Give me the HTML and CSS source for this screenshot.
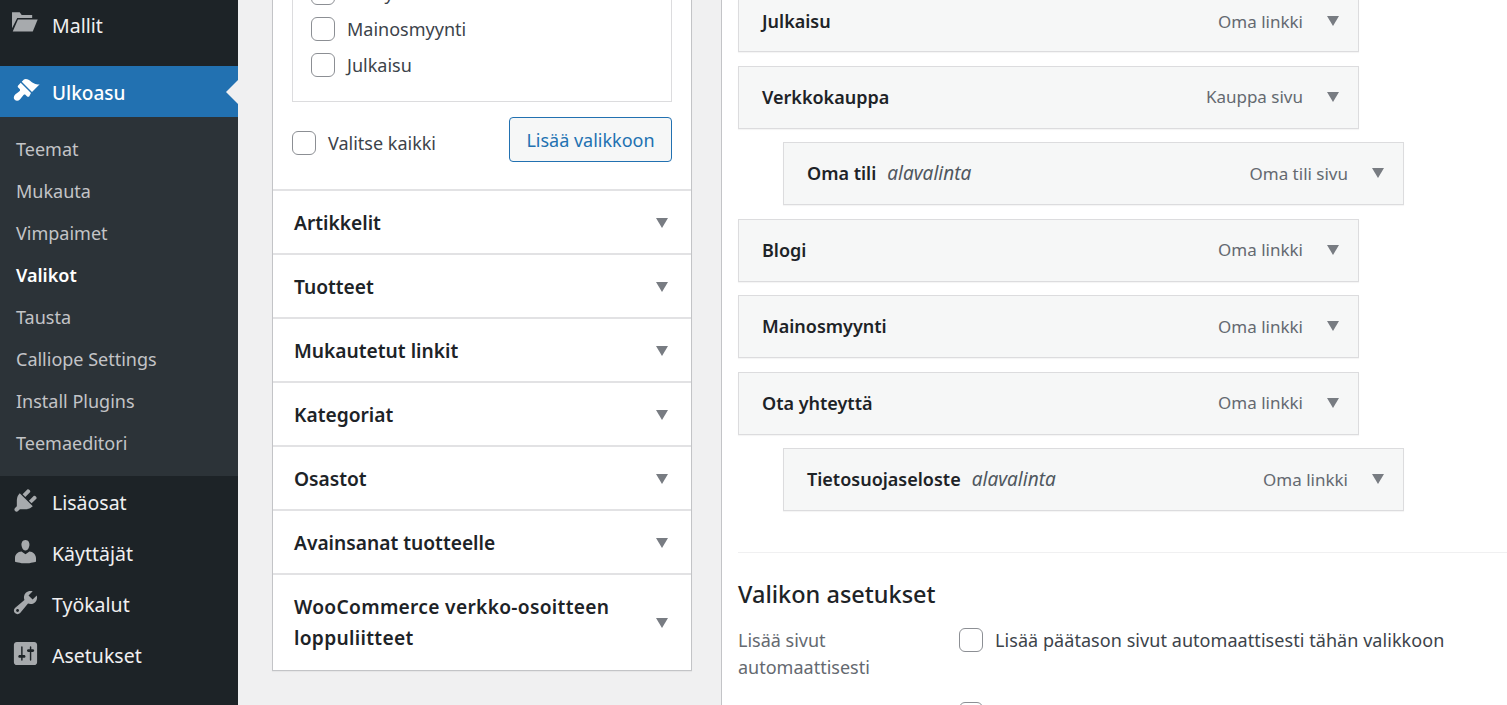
FILE: index.html
```html
<!DOCTYPE html>
<html lang="fi">
<head>
<meta charset="utf-8">
<title>Valikot</title>
<link rel="stylesheet" href="styles.css">
</head>
<body>
<div class="page">
  <aside class="sidebar">
    <a class="nav-item">
      <svg class="nav-icon" viewBox="0 0 20 20"><path d="M.7 2.2h5.3l1.4 1.9h7.2v2.1H4.3L.7 13.2z"/><path d="M4.8 7.2h13.6L15 15.5H1.2z"/></svg>
      <span>Mallit</span>
    </a>
    <div class="nav-sep"></div>
    <a class="nav-item is-current">
      <svg class="nav-icon" viewBox="0 0 20 20"><path d="M14.48 11.06L7.41 3.99l1.5-1.5c.5-.56 2.3-.47 3.51.32 1.21.8 1.43 1.28 2.91 2.1 1.18.64 2.45 1.26 4.45.85zm-.71.71L6.7 4.7 4.93 6.47c-.39.39-.39 1.02 0 1.41l1.06 1.06c.39.39.39 1.03 0 1.42-.6.6-1.43 1.11-2.21 1.69-.35.26-.7.53-1.01.84-1.03 1.03-1.1 2.65-.2 3.56.9.9 2.53.83 3.56-.2.31-.31.58-.66.84-1.01.58-.78 1.09-1.61 1.69-2.21.39-.39 1.03-.39 1.42 0l1.06 1.06c.39.39 1.02.39 1.41 0z"/></svg>
      <span>Ulkoasu</span>
    </a>
    <ul class="submenu">
      <li>Teemat</li>
      <li>Mukauta</li>
      <li>Vimpaimet</li>
      <li class="is-active">Valikot</li>
      <li>Tausta</li>
      <li>Calliope Settings</li>
      <li>Install Plugins</li>
      <li>Teemaeditori</li>
    </ul>
    <a class="nav-item">
      <svg class="nav-icon" viewBox="0 0 20 20"><path d="M13.11 4.36L9.87 7.6 8 5.73l3.24-3.24c.35-.34 1.05-.2 1.56.32.52.51.66 1.21.31 1.55zm-8 1.77l.91-1.12 9.01 9.01-1.19.84c-.71.71-2.63 1.16-3.82 1.16H6.14L4.9 17.26c-.59.59-1.54.59-2.12 0-.59-.58-.59-1.53 0-2.12l1.24-1.24v-3.88c0-1.13.4-3.19 1.09-3.89zm7.26 3.97l3.24-3.24c.34-.35 1.04-.21 1.55.31.52.51.66 1.21.31 1.55l-3.24 3.25z"/></svg>
      <span>Lisäosat</span>
    </a>
    <a class="nav-item">
      <svg class="nav-icon" viewBox="0 0 20 20"><path d="M10 9.25c-2.27 0-2.73-3.44-2.73-3.44C7 4.02 7.82 2 9.97 2c2.16 0 2.98 2.02 2.71 3.81 0 0-.41 3.44-2.68 3.44zm0 2.57L12.72 10c2.39 0 4.52 2.33 4.52 4.53v2.49s-3.65 1.13-7.24 1.13c-3.65 0-7.24-1.13-7.24-1.13v-2.49c0-2.25 1.94-4.48 4.47-4.48z"/></svg>
      <span>Käyttäjät</span>
    </a>
    <a class="nav-item">
      <svg class="nav-icon" viewBox="0 0 20 20"><path d="M16.68 9.77c-1.34 1.34-3.3 1.67-4.95.99l-5.41 6.52c-.99.99-2.59.99-3.58 0s-.99-2.59 0-3.57l6.52-5.42c-.68-1.65-.35-3.61.99-4.95 1.28-1.28 3.12-1.62 4.72-1.06l-2.89 2.89 2.82 2.82 2.86-2.87c.53 1.58.18 3.39-1.08 4.65zM3.81 16.21c.4.39 1.04.39 1.43 0 .4-.4.4-1.04 0-1.43-.39-.4-1.03-.4-1.43 0-.39.39-.39 1.03 0 1.43z"/></svg>
      <span>Työkalut</span>
    </a>
    <a class="nav-item">
      <svg class="nav-icon" viewBox="0 0 20 20"><path d="M18 16V4c0-1.1-.9-2-2-2H4c-1.1 0-2 .9-2 2v12c0 1.1.9 2 2 2h12c1.1 0 2-.9 2-2zM8 11h1c.55 0 1 .45 1 1s-.45 1-1 1H8v1.5c0 .28-.22.5-.5.5s-.5-.22-.5-.5V13H6c-.55 0-1-.45-1-1s.45-1 1-1h1V5.5c0-.28.22-.5.5-.5s.5.22.5.5V11zm5-2h-1c-.55 0-1-.45-1-1s.45-1 1-1h1V5.5c0-.28.22-.5.5-.5s.5.22.5.5V7h1c.55 0 1 .45 1 1s-.45 1-1 1h-1v5.5c0 .28-.22.5-.5.5s-.5-.22-.5-.5V9z"/></svg>
      <span>Asetukset</span>
    </a>
  </aside>

  <main class="content">
    <section class="picker">
      <div class="picker-top">
        <div class="checklist">
          <label class="check-row"><span class="checkbox"></span>Yhteystiedot</label>
          <label class="check-row"><span class="checkbox"></span>Mainosmyynti</label>
          <label class="check-row"><span class="checkbox"></span>Julkaisu</label>
        </div>
        <div class="picker-actions">
          <label class="check-row select-all"><span class="checkbox"></span>Valitse kaikki</label>
          <button class="add-button" type="button">Lisää valikkoon</button>
        </div>
      </div>
      <div class="accordion-item"><span>Artikkelit</span><i class="arrow"></i></div>
      <div class="accordion-item"><span>Tuotteet</span><i class="arrow"></i></div>
      <div class="accordion-item"><span>Mukautetut linkit</span><i class="arrow"></i></div>
      <div class="accordion-item"><span>Kategoriat</span><i class="arrow"></i></div>
      <div class="accordion-item"><span>Osastot</span><i class="arrow"></i></div>
      <div class="accordion-item"><span>Avainsanat tuotteelle</span><i class="arrow"></i></div>
      <div class="accordion-item is-tall"><span>WooCommerce verkko-osoitteen loppuliitteet</span><i class="arrow"></i></div>
    </section>

    <section class="editor">
      <div class="menu-items">
        <div class="menu-item"><strong>Julkaisu</strong><span class="item-type">Oma linkki</span><i class="arrow"></i></div>
        <div class="menu-item"><strong>Verkkokauppa</strong><span class="item-type">Kauppa sivu</span><i class="arrow"></i></div>
        <div class="menu-item is-sub"><strong>Oma tili</strong><em>alavalinta</em><span class="item-type">Oma tili sivu</span><i class="arrow"></i></div>
        <div class="menu-item"><strong>Blogi</strong><span class="item-type">Oma linkki</span><i class="arrow"></i></div>
        <div class="menu-item"><strong>Mainosmyynti</strong><span class="item-type">Oma linkki</span><i class="arrow"></i></div>
        <div class="menu-item"><strong>Ota yhteyttä</strong><span class="item-type">Oma linkki</span><i class="arrow"></i></div>
        <div class="menu-item is-sub"><strong>Tietosuojaseloste</strong><em>alavalinta</em><span class="item-type">Oma linkki</span><i class="arrow"></i></div>
      </div>
      <div class="settings">
        <h3>Valikon asetukset</h3>
        <div class="setting-row">
          <div class="setting-label">Lisää sivut automaattisesti</div>
          <label class="check-row setting-check"><span class="checkbox"></span>Lisää päätason sivut automaattisesti tähän valikkoon</label>
        </div>
        <div class="setting-row">
          <div class="setting-label"></div>
          <label class="check-row setting-check"><span class="checkbox"></span></label>
        </div>
      </div>
    </section>
  </main>
</div>
</body>
</html>
```

FILE: styles.css
```css
* { box-sizing: border-box; }
html, body { margin: 0; height: 705px; overflow: hidden; }
body { font-family: "Noto Sans", "Open Sans", sans-serif; font-size: 18px; color: #3c434a; background: #f0f0f1; }
.page { display: flex; height: 705px; overflow: hidden; }

.sidebar { width: 238px; flex: none; background: #1d2327; color: #f0f0f1; }
.nav-item { display: flex; height: 51px; padding-left: 11px; font-size: 19.5px; line-height: 53px; }
.nav-item:first-child { margin-top: -1px; }
.nav-icon { width: 29px; height: 29px; margin-top: 10px; margin-right: 12px; flex: none; fill: #a7aaad; }
.nav-sep { height: 16px; }
.nav-item.is-current { position: relative; background: #2271b1; color: #fff; font-size: 19px; font-weight: 500; line-height: 55px; }
.nav-item.is-current .nav-icon { fill: #fff; }
.nav-item.is-current::after { content: ""; position: absolute; right: 0; top: 14px; border: 12px solid transparent; border-right-color: #f0f0f1; border-left-width: 0; }
.submenu { list-style: none; margin: 0; padding: 11px 0 12px; background: #2c3338; color: #c3c4c7; font-size: 18px; }
.submenu li { height: 42px; line-height: 42px; padding-left: 16px; }
.submenu .is-active { color: #fff; font-weight: 600; }

.content { flex: 1; display: flex; min-width: 0; padding-left: 34px; }
.picker { width: 420px; flex: none; margin-top: -40px; margin-right: 29px; align-self: flex-start; background: #fff; border: 1px solid #c3c4c7; border-top: 0; box-shadow: 0 1px 1px rgba(0, 0, 0, .04); }
.picker-top { padding: 0 19px; }
.checklist { height: 142px; padding: 15px 18px 0; border: 1px solid #dcdcde; border-top: 0; }
.check-row { display: flex; align-items: center; gap: 12px; min-height: 36px; }
.checkbox { width: 24px; height: 24px; flex: none; background: #fff; border: 1px solid #8c8f94; border-radius: 6px; }
.picker-actions { display: flex; justify-content: space-between; align-items: center; height: 88px; padding-bottom: 13px; }
.select-all { padding-top: 7px; }
.add-button { width: 163px; height: 45px; padding: 1px 0 0; background: #f6f7f7; border: 1px solid #2271b1; border-radius: 4px; color: #2271b1; font: inherit; }

.accordion-item { display: flex; align-items: center; justify-content: space-between; height: 65px; margin-top: -1px; padding: 0 23px 0 21px; border-top: 2px solid #e2e2e4; color: #1d2327; font-size: 19.2px; font-weight: 600; }
.accordion-item .arrow { margin-top: 1px; }
.accordion-item.is-tall { height: 97px; line-height: 31px; }
.accordion-item.is-tall span { width: 340px; margin-top: -2px; letter-spacing: .3px; }
.arrow { width: 0; height: 0; flex: none; border: 6px solid transparent; border-top: 10px solid #787c82; border-bottom: 0; }

.editor { flex: 1; min-width: 0; background: #fff; border-left: 1px solid #c3c4c7; padding-left: 16px; }
.menu-items { padding-bottom: 41px; border-bottom: 1px solid #f0f0f1; }
.menu-item { display: flex; align-items: center; width: 621px; height: 63px; margin-top: 13.5px; padding: 0 19px 1px 23px; background: #f6f7f7; border: 1px solid #dcdcde; box-shadow: 0 1px 1px rgba(0, 0, 0, .04); color: #50575e; }
.menu-item:first-child { height: 52.25px; margin-top: 0; border-top: 0; padding-bottom: 9.25px; }
.menu-item.is-sub { margin-left: 45px; }
.menu-item strong { color: #1d2327; font-weight: 600; }
.menu-item em { margin-left: 11px; font-size: 19px; }
.item-type { margin-left: auto; margin-right: 24px; color: #646970; font-size: 17px; }

.settings { padding-top: 22.5px; }
.settings h3 { margin: 0 0 15px; color: #1d2327; font-size: 23.5px; font-weight: 500; line-height: 36px; }
.setting-row { display: flex; margin-bottom: 20px; }
.setting-label { width: 221px; flex: none; line-height: 27px; color: #646970; }
.setting-check { align-self: flex-start; margin-top: -4.5px; letter-spacing: .06px; }
```
